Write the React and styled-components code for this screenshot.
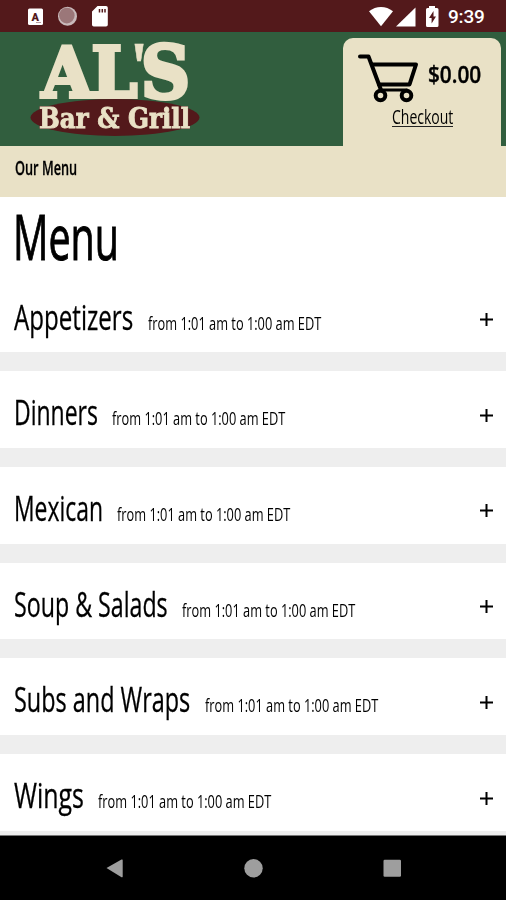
import React, { useLayoutEffect, useRef, useState } from 'react';
import styled, { createGlobalStyle } from 'styled-components';

const GlobalStyle = createGlobalStyle`
  * {
    box-sizing: border-box;
  }
  body {
    margin: 0;
    background: #fff;
    font-family: 'Open Sans', 'Noto Sans', sans-serif;
    color: #000;
  }
`

const Screen = styled.div`
  display: flex;
  flex-direction: column;
  width: 506px;
  height: 900px;
  overflow: hidden;
  background: #fff;
`

const StatusBar = styled.div`
  display: flex;
  flex: none;
  justify-content: space-between;
  height: 32px;
  background: #53191b;
`

const Clock = styled.span`
  width: 58px;
  font: 500 19px/34px Roboto, sans-serif;
  letter-spacing: -0.2px;
  color: #fff;
`

const StatusGroup = styled.div`
  display: flex;
`

const Header = styled.header`
  display: flex;
  flex: none;
  justify-content: space-between;
  height: 114px;
  padding-right: 5px;
  background: #315e3e;
  border-top: 1px solid #2c6040;
`

const LogoArt = styled.svg`
  overflow: visible;
  font-family: 'DejaVu Serif', serif;
  font-weight: 700;
`

const Tagline = styled.text`
  font-size: 28px;
  fill: #e9e1c6;
  stroke: #e9e1c6;
  stroke-width: 0.9px;
  filter: drop-shadow(0 0 0.7px #53191b) drop-shadow(0 0 0.7px #53191b);
`

const CartTab = styled.div`
  display: flex;
  flex-direction: column;
  align-items: center;
  width: 158px;
  margin-top: 5px;
  padding-top: 15px;
  background: #e9e1c6;
  border-radius: 10px 10px 0 0;
`

const CartRow = styled.div`
  display: flex;
  gap: 10px;
  height: 52px;
  padding-right: 5px;
`

const Breadcrumb = styled.nav`
  flex: none;
  height: 51px;
  padding: 8px 15px;
  background: #e9e1c6;
`

const Content = styled.main`
  flex: 1;
  overflow: hidden;
  background: #eee;
`

const Title = styled.h1`
  height: 78.6px;
  margin: 0;
  padding: 0 13px;
  background: #fff;
`

const Category = styled.section`
  display: flex;
  justify-content: space-between;
  height: 76.6px;
  margin-bottom: 19.1px;
  padding: 21px 13px 0 14px;
  background: #fff;
`

const CategoryText = styled.div`
  display: flex;
  align-items: baseline;
  gap: 14px;
  height: 40px;
`

const Plus = styled.svg`
  margin-top: 16.5px;
`

const NavBar = styled.div`
  display: flex;
  flex: none;
  justify-content: center;
  height: 65px;
  background: #000;
  border-top: 1px solid #777;
`

const Label = styled.span`
  display: inline-block;
  width: ${(props) => props.$width}px;
  font-size: ${(props) => props.$size}px;
  font-weight: ${(props) => props.$weight || 400};
  line-height: ${(props) => props.$line}px;
  white-space: nowrap;
  -webkit-text-stroke: ${(props) => props.$stroke || 0}px currentColor;
`

const CheckoutLink = styled.a`
  display: block;
  height: 22px;
  line-height: 0;
  border-bottom: 1px solid #222;
`

const Squeezed = styled.span`
  display: inline-block;
  transform-origin: 0 50%;
`

// Condenses the text horizontally until it is as wide as its label
function Condensed({ width, size, line, weight, stroke, children }) {
  const ref = useRef(null);
  const [scale, setScale] = useState(1);

  useLayoutEffect(() => {
    setScale(width / ref.current.offsetWidth);
  }, [width, size, weight]);

  return (
    <Label $width={width} $size={size} $line={line} $weight={weight} $stroke={stroke}>
      <Squeezed ref={ref} style={{ transform: `scaleX(${scale})` }}>{children}</Squeezed>
    </Label>
  );
}

const categories = [
  { name: 'Appetizers', width: 119.5 },
  { name: 'Dinners', width: 84 },
  { name: 'Mexican', width: 89 },
  { name: 'Soup & Salads', width: 154 },
  { name: 'Subs and Wraps', width: 176.5 },
  { name: 'Wings', width: 70 },
];

function Logo() {
  return (
    <LogoArt width="220" height="113" viewBox="0 33 220 113">
      <ellipse cx="115" cy="117.5" rx="84.5" ry="18.5" fill="#53191b" />
      <g transform="scale(.93 1)">
        <text fill="#e9e1c6" stroke="#e9e1c6" strokeWidth="4" fontSize="70">
          <tspan x="45 98.500" y="97">AL</tspan>
          <tspan x="139.500" y="91" fontFamily="Liberation Serif" fontSize="72" strokeWidth="0.5">'</tspan>
          <tspan x="151.500" y="98.500" fontSize="73">S</tspan>
        </text>
      </g>
      <Tagline x="39" y="127.500" textLength="151" lengthAdjust="spacingAndGlyphs">Bar &amp; Grill</Tagline>
    </LogoArt>
  );
}

function Cart() {
  return (
    <svg width="60" height="50" viewBox="0 0 60 50" fill="none" stroke="#000" strokeWidth="4" strokeLinecap="round" strokeLinejoin="round">
      <path d="M2 3.500h8.500L23 37" />
      <path d="M14.500 11.500H58L51.500 31.500H21" />
      <path d="M23 37h26" strokeWidth="3" />
      <circle cx="22.500" cy="42.500" r="4.800" />
      <circle cx="48.500" cy="42.500" r="4.800" />
    </svg>
  );
}

function App() {
  return (
    <Screen>
      <GlobalStyle />
      <StatusBar>
        <svg width="120" height="32" viewBox="0 0 120 32">
          <rect x="28" y="8.500" width="15" height="16.500" rx="1.500" fill="#fff" />
          <text x="35.300" y="20.500" textAnchor="middle" fontFamily="Roboto" fontWeight="900" fontSize="11" fill="#53191b">A</text>
          <path d="M36 22.500h5" stroke="#b79a9c" strokeWidth="1" />
          <circle cx="67.500" cy="16.200" r="9.500" fill="#c9babb" />
          <circle cx="66.800" cy="15.600" r="7.800" fill="#9b7779" />
          <path d="M97.500 6H106a1.800 1.800 0 0 1 1.800 1.800V24.700a1.800 1.800 0 0 1-1.800 1.800H93.800a1.800 1.800 0 0 1-1.800-1.800V11.500z" fill="#fff" />
          <path d="M99.500 9v3.500M102.300 9v3.500M105 9v3.500" stroke="#53191b" strokeWidth="1.500" />
        </svg>
        <StatusGroup>
          <svg width="80" height="32" viewBox="368 0 80 32" fill="#fff">
            <path d="M381 26.300L369 11.300Q374.500 7 381 7T393 11.300Z" />
            <path d="M415.500 7.500V26.500H396Z" />
            <path d="M429 8v-2h6v2h2a1.500 1.500 0 0 1 1.500 1.500V25.500a1.500 1.500 0 0 1-1.500 1.500h-9.500a1.500 1.500 0 0 1-1.500-1.500V9.500a1.500 1.500 0 0 1 1.500-1.500z" />
            <path d="M433.500 11L429 18h2.600v5.500L436 16.500h-2.500z" fill="#53191b" />
          </svg>
          <Clock>9:39</Clock>
        </StatusGroup>
      </StatusBar>
      <Header>
        <Logo />
        <CartTab>
          <CartRow>
            <Cart />
            <Condensed width={53} size={23.5} line={43} weight={600} stroke={0.4}>$0.00</Condensed>
          </CartRow>
          <CheckoutLink>
            <Condensed width={61} size={19.5} line={24}>Checkout</Condensed>
          </CheckoutLink>
        </CartTab>
      </Header>
      <Breadcrumb>
        <Condensed width={62} size={19.5} line={28} weight={600} stroke={0.3}>Our Menu</Condensed>
      </Breadcrumb>
      <Content>
        <Title>
          <Condensed width={106} size={62.5} line={77} stroke={1}>Menu</Condensed>
        </Title>
        {categories.map((category) => (
          <Category key={category.name}>
            <CategoryText>
              <Condensed width={category.width} size={34.5} line={40} stroke={0.3}>{category.name}</Condensed>
              <Condensed width={173.5} size={18} line={24}>from 1:01 am to 1:00 am EDT</Condensed>
            </CategoryText>
            <Plus width="13" height="13" viewBox="0 0 13 13" stroke="#000" strokeWidth="2">
              <path d="M0 6.500h13M6.500 0v13" />
            </Plus>
          </Category>
        ))}
      </Content>
      <NavBar>
        <svg width="506" height="64" viewBox="0 836 506 64" fill="#9e9e9e">
          <path d="M106.500 868L121.500 859.500a.8.800 0 0 1 1.200.700V876.500a.8.800 0 0 1-1.200.700z" />
          <circle cx="253.500" cy="868.300" r="9.200" />
          <rect x="383.500" y="859.800" width="17.500" height="17" rx="1.200" />
        </svg>
      </NavBar>
    </Screen>
  );
}

export default App;
